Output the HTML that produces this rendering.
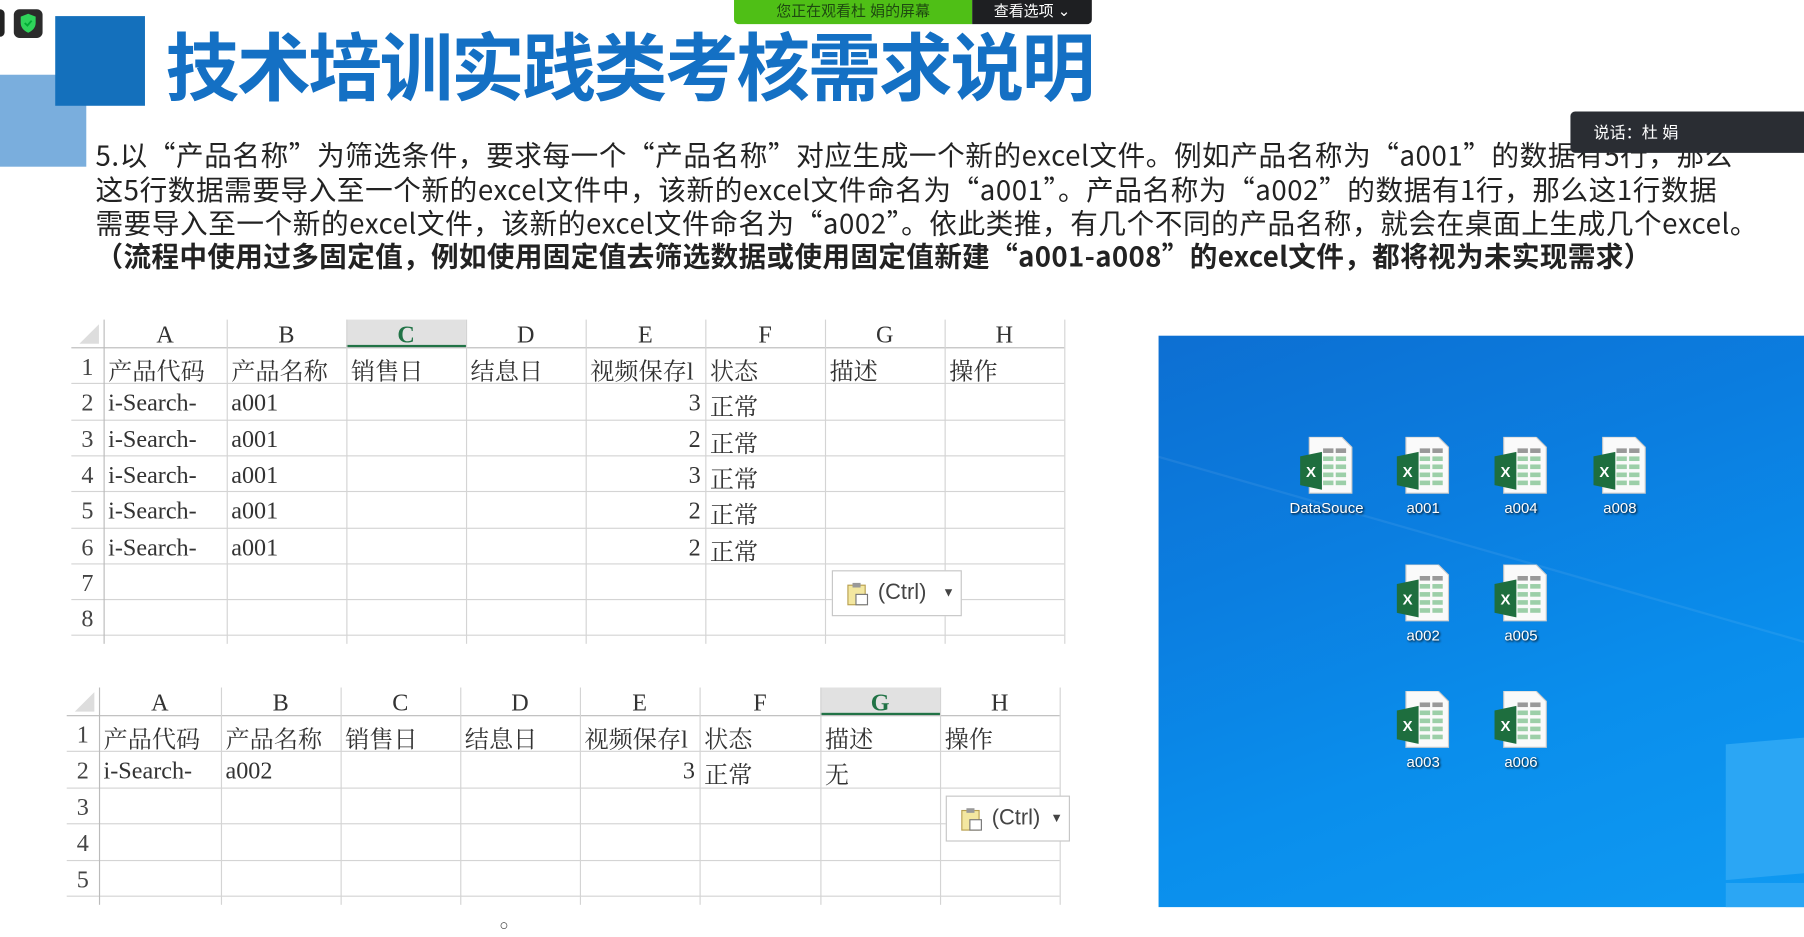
<!DOCTYPE html>
<html><head><meta charset="utf-8">
<style>
html,body{margin:0;padding:0;background:#fff;overflow:hidden;width:1804px;height:937px}
#w{position:absolute;left:0;top:0;width:1568px;height:815px;transform:scale(1.15051,1.14969);transform-origin:0 0;font-family:"Liberation Sans","Noto Sans CJK SC",sans-serif}
.a{position:absolute}
.p{position:absolute;left:83px;font-size:24px;color:#222;white-space:nowrap;letter-spacing:0.5px;line-height:30px;font-family:"Noto Sans CJK SC",sans-serif}
.t{position:absolute;font-family:"Liberation Serif","Noto Serif CJK SC",serif;font-size:21px;color:#333}
.hl{position:absolute;height:1px;background:#d4d4d4}
.vl{position:absolute;width:1px;background:#d4d4d4}
.ic{position:absolute;width:60px;text-align:center;color:#fff;font-size:13px;text-shadow:1px 1px 2px #000}
</style></head><body><div id="w">
<div class="a" style="left:0;top:8px;width:4px;height:24px;background:#222;border-radius:0 4px 4px 0"></div>
<div class="a" style="left:12px;top:8px;width:25px;height:25px;background:#2b2b2b;border-radius:5px"></div>
<svg class="a" style="left:16px;top:11px" width="17" height="19" viewBox="0 0 17 19"><path d="M8.5 1 L15 3.5 V9 C15 13 12 16 8.5 17.5 C5 16 2 13 2 9 V3.5 Z" fill="#2fd35a"/><path d="M5.5 9 L7.8 11.2 L11.5 7" stroke="#0a3" stroke-width="1.6" fill="none"/></svg>
<div class="a" style="left:0;top:65px;width:75px;height:80px;background:#7aaedd"></div>
<div class="a" style="left:48px;top:14px;width:78px;height:78px;background:#1470bc"></div>
<div class="a" style="left:144px;top:18px;font-size:64px;font-weight:bold;color:#1470c4;letter-spacing:-2px;line-height:84px;white-space:nowrap">技术培训实践类考核需求说明</div>
<div class="a" style="left:638px;top:0;width:207px;height:21px;background:#4fbf16;border-radius:0 0 0 4px;font-size:13px;color:#1e4a10;text-align:center;line-height:20px">您正在观看杜 娟的屏幕</div>
<div class="a" style="left:845px;top:0;width:104px;height:21px;background:#1e1f22;border-radius:0 0 4px 0;font-size:13px;color:#fff;text-align:center;line-height:20px">查看选项 ⌄</div>
<div class="p" style="top:119px">5.以“产品名称”为筛选条件，要求每一个“产品名称”对应生成一个新的excel文件。例如产品名称为“a001”的数据有5行，那么</div>
<div class="p" style="top:149px">这5行数据需要导入至一个新的excel文件中，该新的excel文件命名为“a001”。产品名称为“a002”的数据有1行，那么这1行数据</div>
<div class="p" style="top:178px">需要导入至一个新的excel文件，该新的excel文件命名为“a002”。依此类推，有几个不同的产品名称，就会在桌面上生成几个excel。</div>
<div class="p" style="top:207px;font-weight:bold;letter-spacing:0.3px">（流程中使用过多固定值，例如使用固定值去筛选数据或使用固定值新建“a001-a008”的excel文件，都将视为未实现需求）</div>
<div class="a" style="left:1365px;top:97px;width:203px;height:36px;background:#2a2d33;border-radius:4px 0 0 4px;color:#fff;font-size:14px;line-height:36px;padding-left:20px;box-sizing:border-box">说话：杜 娟</div>

<div id="t1"></div><div id="t2"></div>
<div class="a" style="left:434px;top:797px;font-size:13px;color:#333">○</div>

<div class="a" style="left:1007px;top:292px;width:561px;height:497px;background:linear-gradient(160deg,#0d6fd2 0%,#0b7ee0 35%,#0a8eec 65%,#0f9af2 100%);overflow:hidden">
 <div class="a" style="left:-50px;top:90px;width:700px;height:2px;background:rgba(255,255,255,.07);transform:rotate(16deg);transform-origin:0 0"></div>
 <div class="a" style="left:493px;top:352px;width:80px;height:118px;background:#2ba6f4;transform:skewY(-5deg)"></div>
 <div class="a" style="left:493px;top:476px;width:80px;height:30px;background:#2ba6f4"></div>
</div>
<div id="icons"></div>
</div>
<script>
function grid(id,x0,y0,cols,rows,hdrH,rowH,hiCol,data,rn){
 var h='';var w=document.getElementById(id);
 var xEnd=cols[cols.length-1];var yEnd=y0+hdrH+rows*rowH;
 h+='<svg class="a" style="left:'+(x0+6)+'px;top:'+(y0+4)+'px" width="20" height="18"><path d="M18 0 L18 17 L1 17 Z" fill="#ddd"/></svg>';
 var L='ABCDEFGH';
 for(var i=0;i<8;i++){
  var l=cols[i],r=cols[i+1];
  if(i==hiCol){h+='<div class="a" style="left:'+l+'px;top:'+y0+'px;width:'+(r-l)+'px;height:'+hdrH+'px;background:#e1e1e1;border-bottom:2px solid #217346;box-sizing:border-box"></div>';}
  h+='<div class="t" style="left:'+l+'px;top:'+(y0+1)+'px;width:'+(r-l)+'px;text-align:center;'+(i==hiCol?'color:#217346;font-weight:bold':'')+'">'+L[i]+'</div>';
 }
 h+='<div class="hl" style="left:'+x0+'px;top:'+(y0+hdrH)+'px;width:'+(xEnd-x0)+'px;background:#bbb"></div>';
 for(var j=1;j<=rows;j++){var y=y0+hdrH+j*rowH;h+='<div class="hl" style="left:'+x0+'px;top:'+y+'px;width:'+(xEnd-x0)+'px"></div>';
  h+='<div class="t" style="left:'+x0+'px;top:'+(y-rowH+5)+'px;width:'+(cols[0]-x0)+'px;text-align:center;color:#444">'+j+'</div>';}
 for(var i=0;i<9;i++){h+='<div class="vl" style="left:'+cols[i]+'px;top:'+y0+'px;height:'+(yEnd-y0+8)+'px;'+(i==0?'background:#bbb':'')+'"></div>';}
 data.forEach(function(d){var r=d[0],c=d[1],txt=d[2],al=d[3];var y=y0+hdrH+(r-1)*rowH+5;
  var l=cols[c],ww=cols[c+1]-l;
  h+='<div class="t" style="left:'+(l+4)+'px;top:'+y+'px;width:'+(ww-8)+'px;white-space:nowrap;overflow:visible;text-align:'+(al||'left')+'">'+txt+'</div>';});
 w.outerHTML=h;
}
var c1=[90,197,301,405,509,613,717,821,925];
var d1=[[1,0,'产品代码'],[1,1,'产品名称'],[1,2,'销售日'],[1,3,'结息日'],[1,4,'视频保存<span style="letter-spacing:-3px">l</span>'],[1,5,'状态'],[1,6,'描述'],[1,7,'操作']];
var v=[3,2,3,2,2];
for(var k=0;k<5;k++){d1.push([k+2,0,'i-Search<span style="letter-spacing:-4px">-</span>']);d1.push([k+2,1,'a001']);d1.push([k+2,4,''+v[k],'right']);d1.push([k+2,5,'正常']);}
grid('t1',62,278,c1,8,24,31.3,2,d1);
var c2=[86,192,296,400,504,608,713,817,921];
var d2=[[1,0,'产品代码'],[1,1,'产品名称'],[1,2,'销售日'],[1,3,'结息日'],[1,4,'视频保存<span style="letter-spacing:-3px">l</span>'],[1,5,'状态'],[1,6,'描述'],[1,7,'操作'],[2,0,'i-Search<span style="letter-spacing:-4px">-</span>'],[2,1,'a002'],[2,4,'3','right'],[2,5,'正常'],[2,6,'无']];
grid('t2',58,598,c2,5,24,31.4,6,d2);
function ctrl(x,y,w,arrow){return '<div class="a" style="left:'+x+'px;top:'+y+'px;width:'+w+'px;height:40px;background:#fff;border:1px solid #c6c6c6;box-sizing:border-box;overflow:hidden;font-size:19px;color:#444;line-height:38px;white-space:nowrap"><svg style="position:absolute;left:12px;top:9px" width="20" height="22"><rect x="1" y="3" width="15" height="17" fill="#f3e7a0" stroke="#b8a050"/><rect x="5" y="1" width="7" height="4" fill="#999"/><rect x="8" y="11" width="10" height="9" fill="#fff" stroke="#777"/></svg><span style="position:absolute;left:39px">(Ctrl)</span>'+(arrow?'<span style="position:absolute;left:'+(w-18)+'px;font-size:11px">▼</span>':'')+'</div>';}
document.getElementById('w').insertAdjacentHTML('beforeend',ctrl(723,496,113,true)+ctrl(822,692,108,true));
function icon(cx,y,label){return '<svg class="a" style="left:'+(cx-23)+'px;top:'+y+'px" width="46" height="50" viewBox="0 0 46 50"><path d="M8 0 H36 L45 9 V49 H8 Z" fill="#fafafa" stroke="#ccc"/><g fill="#9ccfa8"><rect x="20" y="10" width="9" height="4" fill="#999"/><rect x="31" y="10" width="9" height="4" fill="#999"/><rect x="20" y="17" width="9" height="4"/><rect x="31" y="17" width="9" height="4"/><rect x="20" y="24" width="9" height="4"/><rect x="31" y="24" width="9" height="4"/><rect x="20" y="31" width="9" height="4"/><rect x="31" y="31" width="9" height="4"/><rect x="20" y="38" width="9" height="4"/><rect x="31" y="38" width="9" height="4"/></g><path d="M0 17 L19 13 V46 L0 42 Z" fill="#1e6e3e"/><text x="9.5" y="35" fill="#fff" font-size="13" font-weight="bold" text-anchor="middle" font-family="Liberation Sans">X</text></svg><div class="ic" style="left:'+(cx-40)+'px;width:80px;top:'+(y+54)+'px">'+label+'</div>';}
var ih='';
ih+=icon(1153,380,'DataSouce')+icon(1237,380,'a001')+icon(1322,380,'a004')+icon(1408,380,'a008');
ih+=icon(1237,491,'a002')+icon(1322,491,'a005')+icon(1237,601,'a003')+icon(1322,601,'a006');
document.getElementById('icons').outerHTML=ih;
</script>
</body></html>
